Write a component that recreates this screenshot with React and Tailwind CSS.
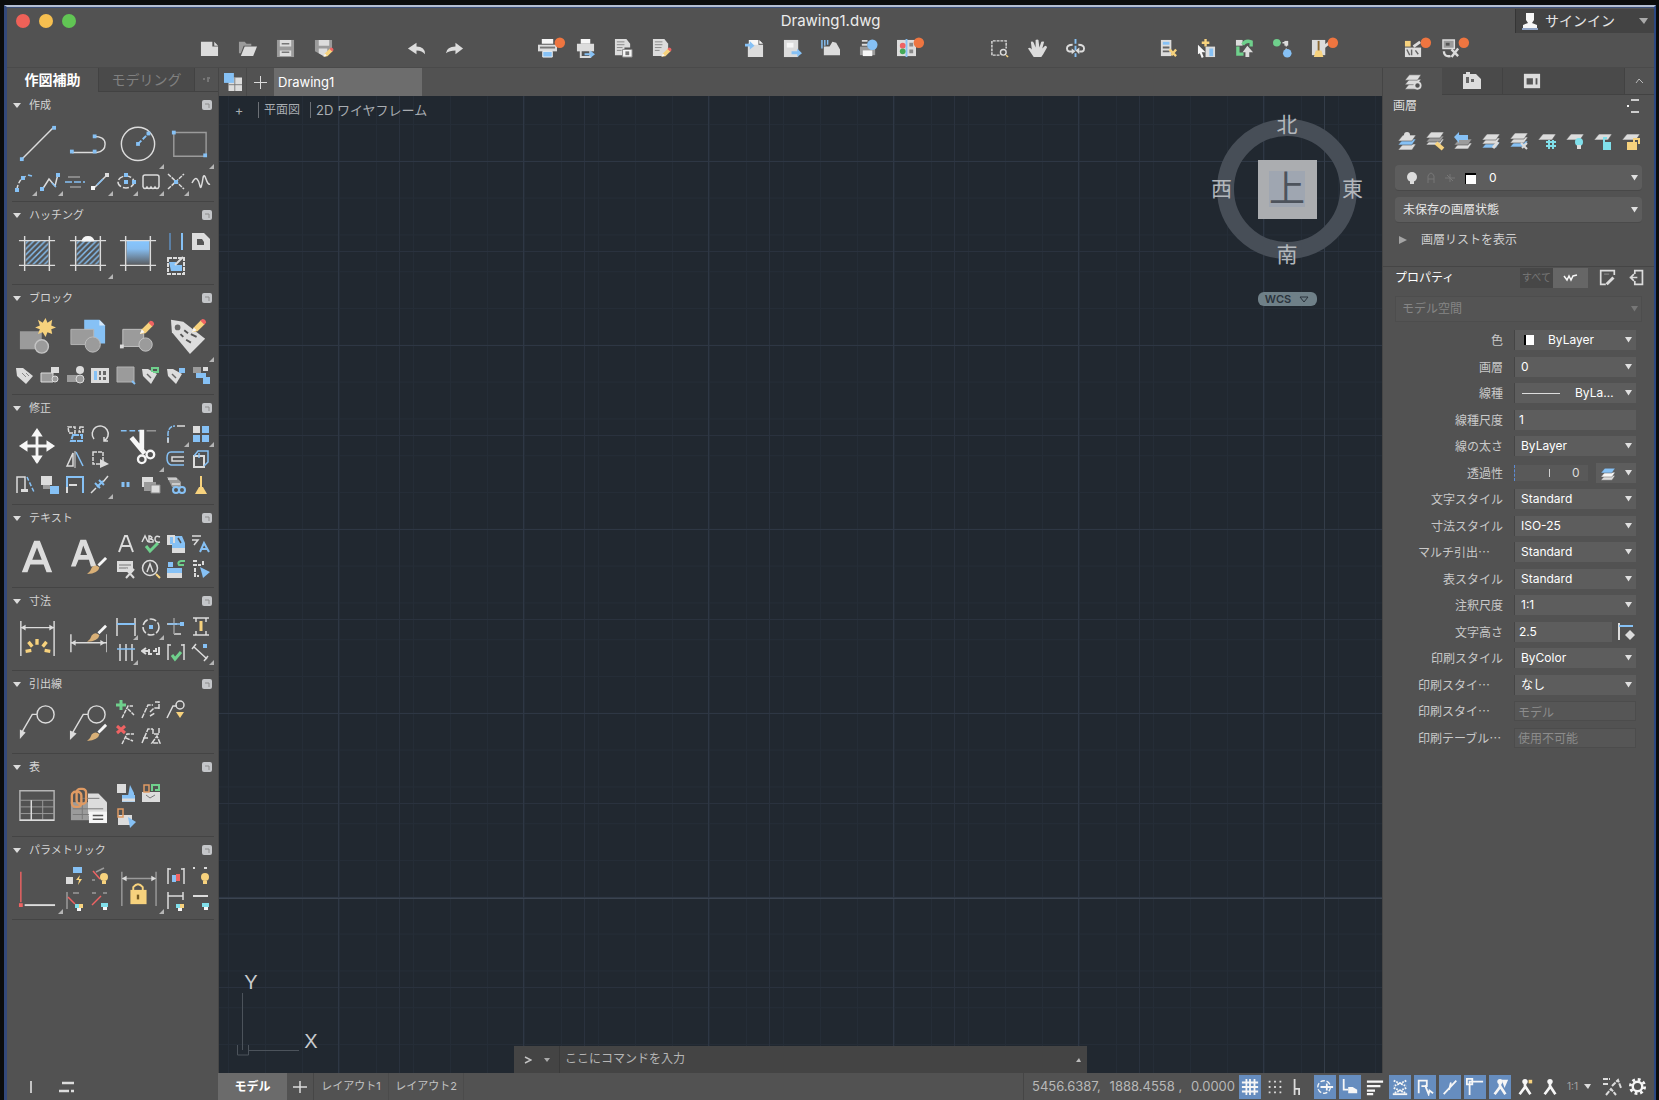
import React, { useState } from 'react';
import clsx from 'clsx';

const L = '#dcdcdc';
const G = '#9b9b9b';
const B = '#86c1f5';
const Y = '#f7d27d';
const R = '#ee6363';
const E = '#6fd08c';
const W = '#f6f6f6';
const C = '#80dfea';

const Svg = ({ size = 20, box = size, children }) => (
  <svg width={size} height={size} viewBox={`0 0 ${box} ${box}`} fill="none" aria-hidden="true">{children}</svg>
);

const Badge = () => <circle cx="23" cy="4" r="5.5" fill="#ee7540" />;

const Pencil = ({ x = 0, y = 0, s = 1 }) => (
  <g transform={`translate(${x} ${y}) scale(${s})`}>
    <path d="M0 14l2-5 8-8 4 4-8 8z" fill={Y} />
    <path d="M9 2l2-2q4 0 4 4l-2 2z" fill={R} />
    <path d="M0 14l2-5 3 3z" fill={W} />
  </g>
);

const Brush = ({ x = 0, y = 0 }) => (
  <g transform={`translate(${x} ${y})`}>
    <path d="M20 1L12 9" stroke={W} strokeWidth="3" />
    <path d="M0 18q4-3 5-7 4-4 8 0-1 6-13 7z" fill="#d9b077" />
  </g>
);

/* ---------- top toolbar ---------- */
const bar = {
  new: <path d="M1 3h12v5h6v10H1zM15 3l4 4h-4z" fill={L} />,
  open: <><path d="M1 3h6l2 2h5v2H6L3 15H1z" fill={G} /><path d="M7 8h13l-4 10H3z" fill={L} /></>,
  save: <><path d="M1 1h18v18H1z" fill={G} /><path d="M4 1h12v7H4zM4 12h12v6H4z" fill={L} /><path d="M6 5h8M6 14h8" stroke="#777" strokeWidth="1.5" /></>,
  saveAs: <><path d="M1 1h18v12l-7 6-11-6z" fill={G} /><path d="M5 1h11v6H5zM5 10h9v5l-4 3-5-3z" fill={L} /><Pencil x={10} y={9} s={0.7} /></>,
  undo: <path d="M1 10l9-6v4q9 0 9 8-3-4-9-4v4z" fill={L} />,
  redo: <path d="M19 10l-8-6v4q-9 0-10 7 4-3 10-3v4z" fill={L} />,
  plot: <><path d="M4 0h12v5H4z" fill={W} /><path d="M0 6h20v7H0z" fill={L} /><path d="M2 8h16v2H2z" fill="#777" /><path d="M5 13h10v6H5z" fill={B} stroke={W} /><Badge /></>,
  plot2: <><path d="M5 0h10v5H5z" fill={W} /><path d="M1 5h18v8H1z" fill={L} /><path d="M5 12h10v7H5z" fill="#555" stroke={L} strokeWidth="2" /><path d="M9 15h6v-3l5 4-5 4v-3H9z" fill={B} /></>,
  page: <><path d="M1 0h12l4 5v4h-6v8H1z" fill={L} /><path d="M3 3h8M3 6h8M3 9h6M3 12h5" stroke="#888" /><path d="M9 11h10v8H9z" fill={W} stroke="#888" /><path d="M12 13h4v4h-4z" fill="#777" /></>,
  batch: <><path d="M1 0h12l4 5v7l-5 6H1z" fill={L} /><path d="M3 3h8M3 6h8M3 9h7M3 12h5" stroke="#888" /><Pencil x={10} y={9} s={0.7} /></>,
  import: <><path d="M3 5h9V1h2v5h5v13H3z" fill={L} /><path d="M4 1h10v5H4zM15 1l4 4h-4z" fill={W} /><path d="M0 5h5V2l5 5-5 4V8H0z" fill={B} /></>,
  export: <><path d="M1 1h15v18H1z" fill={L} /><path d="M4 4h7v5H4z" fill={W} /><path d="M9 13h6v-3l5 5-5 4v-3H9z" fill={B} /></>,
  attach: <><path d="M3 17V8h6l3-5 4 1 4 7v6z" fill={L} /><path d="M1 1v9M4 1v6M7 1v5" stroke={B} strokeWidth="1.5" /></>,
  web: <><path d="M1 8h16v9H1z" fill={G} /><path d="M4 12h10v6H4z" fill={W} /><path d="M3 2h6M3 6h6" stroke={L} strokeWidth="2" /><circle cx="14" cy="6" r="5.5" fill={B} /></>,
  compare: <><path d="M0 1h20v17H0z" fill={L} /><path d="M10 0v19" stroke={B} strokeWidth="2" /><circle cx="6" cy="7" r="3" fill={R} /><circle cx="6" cy="13" r="3" fill="#45a857" /><path d="M13 4h4v4h-4zM13 11h4v4h-4z" fill="#888" /><Badge /></>,
  window: <><path d="M10 17H2V2h15v8" stroke={L} strokeWidth="1.5" strokeDasharray="3 1" /><circle cx="14" cy="14" r="3" fill="#525252" stroke={L} strokeWidth="1.5" /><path d="M17 17l2 2" stroke={Y} strokeWidth="1.5" /></>,
  pan: <path d="M6 19q-4-6-6-9 2-2 4 1L3 3q2-1 3 1l2 5V1q2-1 3 0l1 8 2-6q2-1 3 0l-2 7 3-3q2 0 2 2l-4 7-2 3z" fill={L} />,
  orbit: <><path d="M10 0v5M10 7v5M10 15v4" stroke={B} strokeWidth="2" /><path d="M7 6q-6 0-6 4t6 3M13 6q6 0 6 4t-5 3" stroke={L} strokeWidth="2" /><path d="M6 10l4 3-4 3zM14 9v7l-4-4z" fill={L} /></>,
  props: <><path d="M2 1h11v17H2z" fill={L} /><path d="M4 3h7v3H4z" fill={B} /><path d="M4 9h7M4 13h7" stroke="#666" strokeWidth="2" /><path d="M11 11l7 7M18 11l-5 6" stroke={Y} strokeWidth="2.5" /></>,
  select: <><path d="M1 6l8 8H5l2 5-2 1-2-5-2 1z" fill={W} /><path d="M9 8h10v11H9z" fill={L} /><path d="M13 10h4v8h-4z" fill={B} /><path d="M9 0v8M5 4h8" stroke={Y} strokeWidth="2.5" /></>,
  sync: <><path d="M1 1h7v6H1z" fill={L} /><path d="M8 6q3-5 9-3v5M3 8v8h6" stroke={E} strokeWidth="3.5" /><path d="M13 7l6 7h-4v5h-4v-5H8z" fill={L} /></>,
  nodes: <><path d="M5 4h9v10" stroke={L} strokeWidth="1.5" strokeDasharray="3 2" /><circle cx="4" cy="4" r="4" fill={E} /><path d="M12 2h4v5h-4z" fill={L} /><circle cx="15" cy="15" r="4.500" fill={B} /></>,
  clean: <><path d="M1 1h14v16H1z" fill={L} /><path d="M8 2v11" stroke="#8c6a34" strokeWidth="2" /><path d="M5 12h6l2 7H3z" fill={Y} /><path d="M14 8l5-4" stroke={L} strokeWidth="3" /><Badge /></>,
  count: <><path d="M1 2h6v6H1z" fill={Y} /><path d="M1 9h17v10H1z" fill={L} /><path d="M3 11l3 6M8 11v6M12 12l3 4" stroke="#666" strokeWidth="1.5" /><path d="M10 8l7-5" stroke={L} strokeWidth="3" /><Badge /></>,
  find: <><path d="M1 1h12v9H1z" fill={G} stroke={L} strokeWidth="1.500" /><path d="M4 4h4v3H4z" fill="#555" /><path d="M2 13q0 6 7 5M17 10l-7 9M10 11l7 7" stroke={L} strokeWidth="2.500" /><Badge /></>,
};

const barGroups = [
  ['new', 'open', 'save', 'saveAs'],
  ['undo', 'redo'],
  ['plot', 'plot2', 'page', 'batch'],
  ['import', 'export', 'attach', 'web', 'compare'],
  ['window', 'pan', 'orbit'],
  ['props', 'select', 'sync', 'nodes', 'clean'],
  ['count', 'find'],
];

/* ---------- tool palette, large icons on a 40 grid ---------- */
const sq = (x, y, c = B) => <rect x={x - 2} y={y - 2} width="4" height="4" fill={c} />;

const Frame = ({ fill, top }) => (
  <>
    <rect x="8" y="7" width="24" height="25" fill={fill} />
    <path d="M1 7h38M1 33h38" stroke={L} strokeWidth="1.5" />
    <path d="M7 2v37M33 2v37" stroke={L} strokeWidth="1.5" />
    {top}
  </>
);

const big = {
  line: <><path d="M4 37L37 4" stroke={L} strokeWidth="1.500" />{sq(4, 37)}{sq(38, 4)}</>,
  pline: <><path d="M3 30h26q9-1 9-9t-12-8" stroke={L} strokeWidth="1.500" />{sq(3, 29)}{sq(27, 29)}{sq(27, 13)}</>,
  circle: <><circle cx="20" cy="21" r="17.500" stroke={L} strokeWidth="1.500" /><path d="M20 21l11-11" stroke={B} strokeWidth="2" strokeDasharray="5 2" />{sq(20, 21)}{sq(31, 10)}</>,
  rect: <><path d="M4 9h34v25H4z" stroke={G} strokeWidth="1.500" />{sq(4, 9)}{sq(37, 33)}</>,
  hatch: <Frame fill="url(#hatch)" />,
  boundary: <Frame fill="url(#hatch)" top={<path d="M13 8q1-6 7-6t7 6z" fill={W} />} />,
  gradient: <Frame fill="url(#grad)" />,
  insert: <><path d="M2 15h23v19H2z" fill={G} /><circle cx="25" cy="31" r="7" fill={G} stroke="#c4c4c4" strokeWidth="1.500" /><path d="M29 1l2 5 5-3-1 6 5 2-5 2 1 5-5-2-2 5-3-5-5 2 2-5-5-2 5-2-2-6 5 3z" fill={Y} /></>,
  makeBlock: <><path d="M16 3h16l6 6v19H16z" fill={B} /><path d="M32 3l6 6h-6z" fill="#d5e9fb" /><path d="M2 13h24v16H2z" fill={G} stroke="#b5b5b5" /><circle cx="25" cy="29" r="8" fill={G} stroke="#bdbdbd" /></>,
  editBlock: <><path d="M4 13h22v18H4z" fill={G} stroke="#c4c4c4" /><circle cx="28" cy="29" r="7" fill={G} stroke="#c4c4c4" />{sq(3, 31, L)}<Pencil x={22} y={4} /></>,
  attr: <><path d="M1 3l13 2 23 18-16 16L2 16z" fill={L} /><circle cx="8" cy="11" r="3" fill="#666" /><path d="M11 18l3 3M15 14l4 3M17 24l5 3M22 18l6 3" stroke="#555" strokeWidth="2" /><Pencil x={23} y={2} /></>,
  move: <><path d="M20 5v32M4 20h32" stroke={W} strokeWidth="3" /><path d="M20 1l6 9H14zM20 39l-6-9h12zM1 20l9-6v12zM39 20l-9-6v12z" fill={W} /></>,
  trim: <><path d="M2 4h20" stroke={B} strokeWidth="1.500" strokeDasharray="6 3" /><path d="M29 4h10" stroke={G} strokeWidth="1.500" /><path d="M24 3v20M13 11l14 17" stroke={W} strokeWidth="5" /><circle cx="24" cy="34" r="4" stroke={W} strokeWidth="2.500" /><circle cx="33" cy="29" r="4" stroke={W} strokeWidth="2.500" /></>,
  mtext: <path d="M4 37L17 4h6l13 33h-6l-3-8H13l-3 8zM15 24h10l-5-13z" fill={L} fillRule="evenodd" />,
  textStyle: <><path d="M2 31L12 3h6l11 28h-6l-2-7H10l-3 7zM12 19h7l-4-10z" fill={L} fillRule="evenodd" /><Brush x={19} y={21} /></>,
  dim: <><path d="M3 1v37M38 1v37M3 8h35" stroke={L} strokeWidth="1.500" /><path d="M3 8l5-3v6zM38 8l-5-3v6z" fill={L} /><path d="M20 20v6M11 23l4 5M30 23l-4 5M8 33l6-1M34 33l-6-1" stroke={Y} strokeWidth="3.500" /></>,
  dimStyle: <><path d="M2 15v19M40 15v19M2 24h38" stroke={L} strokeWidth="1.500" /><path d="M2 24l5-3v6zM38 24l-5-3v6z" fill={L} /><Brush x={19} y={5} /></>,
  mleader: <><circle cx="29" cy="12" r="9" stroke={L} strokeWidth="1.500" /><path d="M20 12h-5L4 31" stroke={L} strokeWidth="1.500" /><path d="M2 28l6 3-6 7z" fill={L} /></>,
  leaderStyle: <><circle cx="29" cy="12" r="9" stroke={L} strokeWidth="1.500" /><path d="M20 12h-5L4 31" stroke={L} strokeWidth="1.500" /><path d="M1 29l7 3-7 7z" fill={L} /><Brush x={19} y={22} /></>,
  table: <><path d="M2 5h36v31H2z" stroke="#b5b5b5" strokeWidth="1.500" /><path d="M2 15h36M2 22h36M2 29h36M14 15v21M26 15v21" stroke={G} /><path d="M2 36h36M14 15v21" stroke={L} strokeWidth="1.500" /></>,
  dataLink: <><path d="M2 17h26v19H2z" fill={G} /><path d="M20 8h11l9 9v14H20z" fill={L} /><path d="M12 13h20M4 24h32M4 30h32M14 17v18" stroke="#777" /><path d="M21 27h20v12H21z" fill={W} /><path d="M25 31h11M25 35h11" stroke="#555" strokeWidth="1.500" /><rect x="3" y="6" width="10" height="16" rx="4" stroke="#df9a63" strokeWidth="2.500" /><rect x="8" y="3" width="10" height="16" rx="4" stroke="#df9a63" strokeWidth="2.500" /></>,
  geoAuto: <><path d="M3 3v32" stroke={R} strokeWidth="1.500" />{sq(3, 38, R)}<path d="M7 38h32" stroke={L} strokeWidth="2" /></>,
  dimLock: <><path d="M3 3v36M39 3v36M3 10h36" stroke={G} strokeWidth="1.500" /><path d="M3 10l5-3v6zM39 10l-5-3v6z" fill={L} /><path d="M12 22h17v15H12z" fill={Y} /><path d="M15 22v-3q5-6 10 0v3" stroke={Y} strokeWidth="2" /><path d="M20 27v5" stroke="#775c22" strokeWidth="2.500" /></>,
};

/* ---------- tool palette, small icons on a 20 grid ---------- */
const s = '1.500';
const tag = 'M1 3h7l10 8-7 8L2 11z';
const lightbulb = <><circle cx="14" cy="11" r="4" fill={Y} /><path d="M12 15h4v3h-4z" fill={Y} /></>;
const swatch = <><path d="M10 13h4v4h-4z" fill={C} /><path d="M14 13h4v4h-4z" fill={Y} /><path d="M12 17h4v3h-4z" fill={W} /></>;

const small = {
  arc: <><path d="M2 17Q4 6 12 4" stroke={L} strokeWidth={s} strokeDasharray="4 2" />{sq(2, 18)}{sq(8, 6)}<path d="M13 3l4 1" stroke={B} strokeWidth={s} /></>,
  spline: <><path d="M2 18L9 7l6 7 3-12" stroke={L} strokeWidth={s} />{sq(2, 17)}{sq(18, 3)}<path d="M12 11l4 4" stroke={B} strokeWidth={s} /></>,
  mline: <><path d="M3 5h12M5 15h11" stroke={G} strokeWidth={s} /><path d="M0 10h20" stroke={B} strokeWidth={s} strokeDasharray="7 2" /></>,
  ray: <><path d="M3 17L18 2" stroke={L} strokeWidth={s} /><path d="M7 13l6-6" stroke={B} strokeWidth={s} />{sq(3, 16, W)}{sq(17, 3, L)}</>,
  ellipse: <><ellipse cx="10" cy="10" rx="8" ry="6" stroke={L} strokeWidth={s} strokeDasharray="6 2" />{sq(10, 10)}{sq(18, 10)}{sq(10, 3)}</>,
  revcloud: <><path d="M2 15V5q0-2 2-2h12q2 0 2 2v10" stroke={L} strokeWidth={s} /><path d="M2 15q2 3 4 0 2 3 4 0 2 3 4 0 2 3 4 0" stroke={L} strokeWidth={s} /></>,
  xline: <><path d="M2 2l16 15M2 17L18 2" stroke={L} strokeWidth={s} strokeDasharray="4 1" />{sq(10, 10)}</>,
  sketch: <path d="M1 11q3-6 5-4t3 7 3-8q1-5 3 1t4 5" stroke={L} strokeWidth={s} />,
  colHatch: <><path d="M4 2v17" stroke="#5f8fc0" strokeWidth={s} /><path d="M16 2v17" stroke={B} strokeWidth="2" /></>,
  wipe: <><path d="M1 2h12l6 6v11H1z" fill={L} /><path d="M6 8h5l2 3v3H6z" fill="#555" /></>,
  region: <><path d="M2 2h16v16H2z" stroke={L} strokeWidth="2" strokeDasharray="4 1" /><path d="M3 6h7v3h6v6H5z" fill={B} /><path d="M9 9l8-8" stroke={L} strokeWidth="2" /></>,
  tag: <><path d={tag} fill={L} /><path d="M7 8l4 4M11 8l3 3" stroke="#888" /></>,
  blk1: <><path d="M1 8h12v9H1z" fill={G} stroke={L} /><path d="M11 2h8v6h-8z" fill={L} /><circle cx="15" cy="14" r="3" fill={G} stroke={L} /></>,
  blk2: <><path d="M2 10h11v7H2z" fill={G} /><circle cx="15" cy="5" r="4" fill={L} /><circle cx="15" cy="14" r="4" fill={G} stroke={L} /></>,
  blkTable: <><path d="M1 3h18v15H1z" fill={L} /><path d="M4 6h3v9H4z" fill={B} /><path d="M9 6h2v4H9zM13 6h3v4h-3zM9 12h2v3H9zM13 12h3v3h-3z" fill="#666" /></>,
  base: <><path d="M1 2h17v15H1z" fill={G} stroke="#b3b3b3" /><path d="M16 16l3 3" stroke={B} strokeWidth="2" /></>,
  tagSync: <><path d="M1 4h6l9 5-6 10L2 11z" fill={L} /><path d="M6 9l4 4" stroke="#666" strokeWidth={s} /><path d="M11 7V3h6v4h-5" stroke={E} strokeWidth="2" /></>,
  tagOut: <><path d="M1 4h6l9 5-6 10L2 11z" fill={L} /><path d="M6 9l4 4" stroke="#666" strokeWidth={s} /><path d="M13 3h6v5h-6z" fill={B} /></>,
  swap: <><path d="M2 2h8v6H2z" fill={G} /><path d="M12 2h5v4h-5z" fill={L} /><path d="M5 8h10v4h4v7h-7v-6H5z" fill={B} /></>,
  copy: <><path d="M3 3h7v6H4zM15 3h3v5h-4z" stroke={L} strokeWidth={s} strokeDasharray="4 1" /><path d="M8 11h9v6H6z" stroke={B} strokeWidth="2" strokeDasharray="6 1" /></>,
  rotate: <path d="M4 15A8 8 0 1 1 14 17M14 13v4h4" stroke={L} strokeWidth={s} />,
  mirror: <><path d="M2 17L8 4v13z" stroke={L} strokeWidth={s} /><path d="M11 3l7 14" stroke={B} strokeWidth={s} /><path d="M10 2v17" stroke={L} /></>,
  stretch: <><path d="M3 3h10v12H3z" stroke={L} strokeWidth={s} strokeDasharray="4 1" /><path d="M10 10l9 5-9 4z" fill={L} /></>,
  fillet: <><path d="M2 18V9q1-7 7-7" stroke={B} strokeWidth={s} strokeDasharray="5 1" /><path d="M11 2h8M2 14v5" stroke={L} strokeWidth={s} /></>,
  array: <><path d="M2 2h7v7H2z" fill={L} /><path d="M11 2h7v7h-7zM2 11h7v7H2zM11 11h7v7h-7z" fill={B} /></>,
  offset: <><path d="M18 3H5Q1 3 1 9t4 7h13" stroke={B} strokeWidth={s} /><path d="M18 8H6v4h12" stroke={L} strokeWidth={s} /></>,
  box: <><path d="M3 7h10v11H3z" stroke={L} strokeWidth="2" /><path d="M3 7l4-5h10v11l-4 4M8 9V4" stroke={B} strokeWidth={s} /></>,
  align: <><path d="M2 18V2h8v12" stroke={L} strokeWidth={s} /><path d="M12 2l7 15" stroke={B} strokeWidth={s} strokeDasharray="4 2" /><path d="M6 14h7v3H6z" fill={L} /></>,
  scale: <><path d="M1 1h11v9H1z" fill={L} /><path d="M3 10h7v4H3z" fill={G} /><path d="M10 11h9v8h-9z" fill={B} /></>,
  extend: <><path d="M2 18V2h16v16" stroke={B} strokeWidth="2" /><path d="M4 10h8M2 12v6" stroke={L} strokeWidth="2" /></>,
  break: <><path d="M1 18l5-5M13 7l5-6" stroke={L} strokeWidth={s} /><path d="M5 8l5 5M9 5l5 5M7 12l6-6" stroke={B} strokeWidth="2" /></>,
  join: <path d="M7 7v5M12 7v5" stroke={B} strokeWidth="3" />,
  order: <><path d="M1 2h11v10H1z" fill={L} /><path d="M3 7h12v9H3z" fill={G} /><path d="M10 10h9v8h-9z" fill={L} stroke="#888" /></>,
  chain: <><path d="M1 2h9l5 5v5H6z" fill={G} /><path d="M2 4h9M6 9h8" stroke={L} strokeWidth={s} /><circle cx="10" cy="15" r="3" stroke={B} strokeWidth="2" /><circle cx="16" cy="15" r="3" stroke={B} strokeWidth="2" /></>,
  purge: <><path d="M10 1v12" stroke={Y} strokeWidth="2" /><path d="M8 12h4l4 7H4z" fill={Y} /></>,
  text: <path d="M3 18L9 2h2l6 16M6 12h8" stroke={L} strokeWidth="2" />,
  spell: <><path d="M1 8l3-6 3 6M8 2v6h4q1-3-3-3 4-1 0-3zM19 3q-5-2-5 2t5 3" stroke={L} strokeWidth={s} /><path d="M5 12l4 5 8-8" stroke={E} strokeWidth="3" /></>,
  field: <><path d="M1 1h8v10H1z" fill={L} /><path d="M4 3h3v7H4z" fill={B} /><path d="M9 2h7l3 7v5H6V9h3z" fill={B} /><path d="M12 4l3 5" stroke="#525252" strokeWidth={s} /><path d="M6 14h13v5H6z" fill={L} /></>,
  fitText: <><path d="M1 2h9M1 6h6l-4 5" stroke={L} strokeWidth={s} /><path d="M9 18l4-9 5 9M11 15h6" stroke={B} strokeWidth="2" /></>,
  note: <><path d="M1 2h16v11H1z" fill={L} /><path d="M3 6h12M3 9h9" stroke="#777" /><path d="M10 10l8 9M18 10l-8 9" stroke={L} strokeWidth="2" /></>,
  search: <><circle cx="9" cy="9" r="7.500" stroke={L} strokeWidth={s} /><path d="M6 13l3-8 3 8" stroke={L} strokeWidth={s} /><path d="M15 15l4 4" stroke={Y} strokeWidth="2" /></>,
  update: <><path d="M2 3h5v5H2z" fill={B} /><path d="M1 9h15v5H1z" fill={B} /><path d="M1 14h15v5H1z" fill={L} /><path d="M18 6h-5q-2-3 2-4h4" stroke={E} strokeWidth="2" /></>,
  convert: <><path d="M2 2h5M2 6h8M4 9v8h4M12 2v4" stroke={L} strokeWidth="2" strokeDasharray="4 1" /><path d="M9 8l10 5-7 6-1-4z" fill={B} /></>,
  dLin: <><path d="M1 1v18M19 1v18" stroke={L} strokeWidth={s} /><path d="M1 7h18" stroke={B} strokeWidth="2" /></>,
  dRad: <><circle cx="10" cy="10" r="8" stroke={L} strokeWidth={s} strokeDasharray="7 2" />{sq(10, 10)}</>,
  dOrd: <><path d="M1 7h10M8 17h7" stroke={L} strokeWidth={s} /><path d="M8 1v16" stroke={G} strokeWidth={s} /><path d="M2 7h13" stroke={B} strokeWidth={s} />{sq(16, 7)}</>,
  dInsp: <><path d="M2 1h16M2 18h16M5 1v4M15 1v4M5 14v4M15 14v4" stroke={L} strokeWidth={s} /><path d="M10 4v10" stroke={Y} strokeWidth="3" /></>,
  dCont: <><path d="M4 2v17M10 2v17M16 2v17" stroke={L} strokeWidth={s} /><path d="M1 7h18" stroke={B} strokeWidth={s} /></>,
  dJog: <path d="M1 9h7M5 6l-4 3 4 3M8 7v5h3M12 9h3V6M15 12h3V5" stroke={L} strokeWidth="2" />,
  dCheck: <><path d="M2 2v16M18 2v16M2 3h3M15 3h3" stroke={L} strokeWidth={s} /><path d="M6 13l3 4 6-7" stroke={E} strokeWidth="3" /></>,
  dObl: <><path d="M3 5l13 12M1 7l4-5M13 19l4-5" stroke={L} strokeWidth={s} />{sq(14, 4)}</>,
  lAdd: <><path d="M5 0v10M0 5h10" stroke={E} strokeWidth="3" /><path d="M6 18l6-12h5M12 9l6 6" stroke={L} strokeWidth={s} strokeDasharray="4 1" /></>,
  lAlign: <path d="M1 18L7 5h5M9 12l4-4h5M9 16l5-3M14 2h4v8" stroke={L} strokeWidth={s} strokeDasharray="5 1" />,
  lCollect: <><path d="M1 18L7 6h4" stroke={L} strokeWidth={s} /><circle cx="14" cy="5" r="4" stroke={L} strokeWidth={s} /><path d="M10 12h8l-4 6z" fill={Y} /></>,
  lDel: <><path d="M1 1l8 7M9 1L1 8" stroke={R} strokeWidth="3" /><path d="M6 19l5-10h7M10 13l7 3" stroke={L} strokeWidth={s} strokeDasharray="4 1" /></>,
  lMerge: <path d="M1 18L7 4h5M12 4v5h6V3M11 18l5-7 3 7zM2 13h5" stroke={L} strokeWidth={s} strokeDasharray="5 1" />,
  tLink: <><path d="M1 1h9v9H1z" fill={L} /><path d="M14 2l4 8v3h-6z" fill={B} /><path d="M6 12h13v7H6z" fill={B} /><path d="M6 17h13" stroke={L} strokeWidth="3" /></>,
  tSync: <><path d="M1 9h18v10H1z" fill={L} /><path d="M3 2h5v7H3z" stroke="#df9a63" strokeWidth={s} /><path d="M11 8V2h7v5h-4" stroke={E} strokeWidth="2" /><path d="M5 12l4 3 5-3" stroke="#777" /></>,
  tExp: <><path d="M2 7h14v10H2z" fill={L} /><path d="M2 1h5v8H2z" stroke="#df9a63" strokeWidth={s} /><path d="M12 9l8 5-6 6z" fill={B} /></>,
  pShow: <><path d="M8 1h9v6H8z" fill={B} /><path d="M1 11h7v7H1z" fill={L} /><path d="M15 9l-4 5h3l-1 5 4-6h-3z" fill={Y} /></>,
  pHide: <><path d="M10 13L3 5" stroke={R} strokeWidth={s} /><path d="M6 6l8-4M2 14h3" stroke={G} strokeWidth={s} />{lightbulb}</>,
  pCoin: <><path d="M2 1v17M8 2h6" stroke={G} strokeWidth={s} /><path d="M10 13L3 6" stroke={R} strokeWidth={s} />{swatch}</>,
  pDel: <><path d="M2 2h4M13 2h4" stroke={G} strokeWidth={s} /><path d="M11 5l-9 9" stroke={R} strokeWidth={s} /><path d="M11 12h7v4h-7z" fill={C} /><path d="M13 16h4v3h-4z" fill={W} /></>,
  pDim: <><path d="M2 2v16M18 2v16M2 3h3M15 3h3" stroke={L} strokeWidth={s} /><path d="M6 9h4v7H6z" fill={B} /><path d="M10 8h4v7h-4z" fill={R} /></>,
  pDots: <><path d="M2 2h2M13 2h3" stroke={L} strokeWidth="2" />{lightbulb}</>,
  pConv: <><path d="M2 1v17M2 5h15M17 1v8" stroke={L} strokeWidth={s} />{swatch}</>,
  pLine: <><path d="M2 5h15" stroke={L} strokeWidth="2" /><path d="M11 12h7v4h-7z" fill={C} /><path d="M13 16h4v3h-4z" fill={W} /></>,
};

// a trailing "+" marks a tool with a fly-out, a leading "*" a large one
const sections = [
  { name: '作成', tools: ['*line', '*pline', '*circle+', '*rect+', 'arc+', 'spline+', 'mline', 'ray+', 'ellipse+', 'revcloud+', 'xline+', 'sketch'] },
  { name: 'ハッチング', tools: ['*hatch', '*boundary+', '*gradient', 'colHatch', 'wipe', 'region'] },
  { name: 'ブロック', tools: ['*insert', '*makeBlock', '*editBlock', '*attr+', 'tag', 'blk1', 'blk2', 'blkTable', 'base', 'tagSync', 'tagOut', 'swap'] },
  { name: '修正', tools: ['*move', 'copy', 'rotate', '*trim+', 'fillet+', 'array+', 'mirror', 'stretch', 'offset', 'box', 'align', 'scale', 'extend', 'break+', 'join', 'order', 'chain', 'purge'] },
  { name: 'テキスト', tools: ['*mtext', '*textStyle', 'text', 'spell', 'field', 'fitText', 'note', 'search', 'update', 'convert'] },
  { name: '寸法', tools: ['*dim', '*dimStyle', 'dLin+', 'dRad+', 'dOrd', 'dInsp', 'dCont+', 'dJog', 'dCheck', 'dObl+'] },
  { name: '引出線', tools: ['*mleader', '*leaderStyle', 'lAdd', 'lAlign', 'lCollect', '', 'lDel', 'lMerge'] },
  { name: '表', tools: ['*table', '*dataLink', 'tLink', 'tSync', '', '', 'tExp'] },
  { name: 'パラメトリック', tools: ['*geoAuto+', 'pShow', 'pHide', '*dimLock+', 'pDim', 'pDots', 'pCoin', 'pDel', 'pConv', 'pLine'] },
];

const Tool = ({ id }) => {
  if (!id) return <span />;
  const large = id.startsWith('*');
  const key = id.replace(/[*+]/g, '');
  return (
    <button aria-label={key} className={clsx('relative flex items-center justify-center', large && 'col-span-2 row-span-2')}>
      {large ? <Svg size={38} box={40}>{big[key]}</Svg> : <Svg size={20}>{small[key]}</Svg>}
      {id.endsWith('+') && (
        <svg className="absolute right-0 -bottom-px" width="5" height="5" aria-hidden="true"><path d="M5 0v5H0z" fill="#b5b5b5" /></svg>
      )}
    </button>
  );
};

const Section = ({ name, tools }) => {
  const [open, setOpen] = useState(true);
  return (
    <section className="mr-1 ml-[5px] border-b border-[#444] pb-[6px]">
      <div className="flex h-[26px] items-center pl-px">
        <button aria-expanded={open} onClick={() => setOpen(!open)} className="flex flex-1 items-center gap-2 text-[11px] leading-4 text-[#d4d4d4]">
          <svg width="8" height="5" aria-hidden="true"><path d="M0 0h8L4 5z" fill={L} /></svg>
          {name}
        </button>
        <button aria-label={`${name} 設定`} className="mr-[2px]">
          <svg width="10" height="10" aria-hidden="true"><rect width="10" height="10" rx="2" fill="#c4c6c9" /><path d="M3 4h4v4" stroke="#8c8c8c" fill="none" /></svg>
        </button>
      </div>
      {open && (
        <div className="grid auto-rows-[27px] grid-cols-8 grid-rows-[25px_25px]">
          {tools.map((t, i) => <Tool key={i} id={t} />)}
        </div>
      )}
    </section>
  );
};

/* ---------- layers + properties ---------- */
const sheet = (y, c = L) => <path d={`M6 ${y}h13l-4 6H1z`} fill={c} stroke="#525252" strokeWidth=".600" />;
const layerIcons = [
  ['画層プロパティ', <>{sheet(13)}{sheet(8, B)}{sheet(4)}<circle cx="10" cy="4" r="3" fill={L} /></>],
  ['画層を一致', <>{sheet(8)}{sheet(5, G)}{sheet(1)}<path d="M11 12l7 6" stroke={Y} strokeWidth="4" /></>],
  ['前の画層', <>{sheet(12)}{sheet(8, G)}<path d="M1 6l5-5v3h9v5H6v3z" fill={B} /></>],
  ['選択表示', <>{sheet(11, B)}{sheet(7)}{sheet(3, L)}<path d="M12 17l5-6" stroke={L} strokeWidth="3" /></>],
  ['選択表示解除', <>{sheet(10, B)}{sheet(6)}{sheet(2, L)}<path d="M12 12l6 6M18 12l-5 5" stroke={L} strokeWidth="2" /></>],
  ['フリーズ', <>{sheet(3)}<path d="M9 11h10M9 15h10M12 9v9M16 9v9" stroke={C} strokeWidth="2" /></>],
  ['非表示', <>{sheet(3)}<circle cx="14" cy="11" r="4" fill={C} /><path d="M12 14h4v4h-4z" fill={L} /></>],
  ['ロック', <>{sheet(3)}<path d="M10 11h8v8h-8z" fill={C} /><path d="M11 11V7h3" stroke={C} strokeWidth="2" /></>],
  ['ロック解除', <>{sheet(3)}<path d="M6 11h10v8H6z" fill={Y} /><path d="M13 11V8h5v5" stroke={Y} strokeWidth="2" /></>],
];

const Caret = ({ dim }) => (
  <svg className="pointer-events-none absolute top-1/2 right-1 -mt-[3px]" width="7" height="6" aria-hidden="true">
    <path d="M0 0h7L3.500 5.500z" fill={dim ? '#777' : '#e0e0e0'} />
  </svg>
);

const propRows = [
  { label: '色', value: 'ByLayer', lead: 'color' },
  { label: '画層', value: '0' },
  { label: '線種', value: 'ByLa…', lead: 'line' },
  { label: '線種尺度', value: '1', kind: 'text' },
  { label: '線の太さ', value: 'ByLayer' },
  { label: '透過性', value: '0', kind: 'slider' },
  { label: '文字スタイル', value: 'Standard' },
  { label: '寸法スタイル', value: 'ISO-25' },
  { label: 'マルチ引出…', value: 'Standard' },
  { label: '表スタイル', value: 'Standard' },
  { label: '注釈尺度', value: '1:1' },
  { label: '文字高さ', value: '2.5', kind: 'height' },
  { label: '印刷スタイル', value: 'ByColor' },
  { label: '印刷スタイ…', value: 'なし' },
  { label: '印刷スタイ…', value: 'モデル', kind: 'off' },
  { label: '印刷テーブル…', value: '使用不可能', kind: 'off' },
];

const field = 'h-5 w-full border-l border-[#454545] bg-[#5d5d5d] text-[12px] text-white outline-none';

const PropField = ({ row, id }) => {
  const { kind, lead, value } = row;
  if (kind === 'text') return <input id={id} defaultValue={value} className={clsx(field, 'pl-1')} />;
  if (kind === 'off') return <input id={id} disabled defaultValue={value} className="h-5 w-full border border-[#4c4c4c] bg-[#565656] pl-[3px] text-[12px] text-[#8c8c8c]" />;
  if (kind === 'height') {
    return (
      <div className="flex items-center gap-1">
        <input id={id} defaultValue={value} className={clsx(field, 'min-w-0 flex-1 pl-1')} />
        <button aria-label="高さを指定"><Svg>
          <path d="M3 1v17" stroke={L} strokeWidth="2" /><path d="M3 4h14" stroke={B} strokeWidth="2" /><path d="M14 8l5 5-5 5-5-5z" fill={L} />
        </Svg></button>
      </div>
    );
  }
  if (kind === 'slider') {
    return (
      <div className="flex items-center gap-2">
        <div className="flex h-4 min-w-0 flex-1 items-center border-l border-dashed border-[#5c8bd6] bg-[#595959]">
          <input id={id} type="range" defaultValue="60" className="h-4 min-w-0 flex-1 appearance-none bg-transparent [&::-webkit-slider-thumb]:h-2 [&::-webkit-slider-thumb]:w-px [&::-webkit-slider-thumb]:appearance-none [&::-webkit-slider-thumb]:bg-[#d0d0d0]" />
          <span className="w-4 text-[12px] text-[#ddd]">{value}</span>
        </div>
        <button aria-label="透過性 ByLayer" className="relative h-5 w-10 bg-[#5d5d5d] pl-1">
          <Svg size={16} box={20}>{sheet(13)}{sheet(9, W)}{sheet(4, B)}</Svg>
          <Caret />
        </button>
      </div>
    );
  }
  return (
    <div className="relative">
      {lead === 'color' && <span className="pointer-events-none absolute top-[5px] left-[10px] size-[10px] border-l-2 border-black bg-white" />}
      {lead === 'line' && <span className="pointer-events-none absolute top-[10px] left-[8px] h-px w-[38px] bg-[#ddd]" />}
      <select id={id} className={clsx(field, 'appearance-none', lead === 'color' ? 'pl-[33px]' : lead === 'line' ? 'pl-[60px]' : 'pl-[6px]')}>
        <option>{value}</option>
      </select>
      <Caret />
    </div>
  );
};

const RightPanel = () => (
  <aside className="flex w-[272px] shrink-0 flex-col border-l border-[#454545] text-[12px]">
    <div role="tablist" className="flex h-[27px] text-[#ddd]">
      <button role="tab" aria-selected="true" aria-label="画層" className="flex w-[59px] items-center justify-center"><Svg size={18} box={20}>{sheet(12)}{sheet(7)}{sheet(2)}<circle cx="15" cy="14" r="3.500" fill="#525252" stroke={L} strokeWidth="2" /></Svg></button>
      <button role="tab" aria-label="ブロック" className="flex w-[61px] items-center justify-center border-r border-b border-[#424242] bg-[#4a4a4a]"><Svg size={20}><path d="M1 3h3V1h4v2h6l5 5v10H1z" fill={L} /><path d="M4 6h3v6H4zM9 8h3v3H9z" fill="#666" /></Svg></button>
      <div className="flex flex-1 border-b border-[#424242] bg-[#4a4a4a]">
        <button role="tab" aria-label="シートセット" className="flex w-[58px] items-center justify-center"><Svg size={18} box={20}><path d="M1 2h18v16H1z" fill={L} /><path d="M4 7h7v7H4zM14 7h2v7h-2z" fill="#555" /></Svg></button>
      </div>
      <button aria-label="折りたたむ" className="flex w-[30px] items-center justify-center border-b border-l border-[#424242]"><svg width="9" height="6" fill="none" aria-hidden="true"><path d="M1 5l3-4 4 4" stroke="#bbb" /></svg></button>
    </div>

    <div className="flex h-[22px] items-center justify-between pr-[14px] pl-[10px] text-[#ddd]">
      <h2>画層</h2>
      <button aria-label="切り離し"><svg width="14" height="14" fill="none" aria-hidden="true"><path d="M5 1h8M5 13h8" stroke={W} strokeWidth="1.500" /><path d="M1 7h2" stroke={W} strokeWidth="2" /></svg></button>
    </div>
    <div className="flex h-12 items-center pl-[10px]">
      {layerIcons.map(([name, art]) => (
        <button key={name} aria-label={name} className="flex w-7 justify-center"><Svg>{art}</Svg></button>
      ))}
    </div>

    <div className="flex flex-col gap-[6px] pr-3 pl-3">
      <div className="relative">
        <span className="pointer-events-none absolute inset-y-0 left-3 flex items-center gap-[10px]">
          <svg width="10" height="12" aria-hidden="true"><circle cx="5" cy="5" r="5" fill={L} /><path d="M3 9h4v3H3z" fill={L} /></svg>
          <svg width="8" height="12" fill="none" aria-hidden="true"><path d="M1 11V4q3-6 6 0v7M1 7h6" stroke="#777" /></svg>
          <svg width="10" height="10" fill="none" aria-hidden="true"><path d="M0 5h10M5 1v8M2 2l6 6" stroke="#777" /></svg>
          <span className="size-[11px] border-t-2 border-l border-black bg-white" />
        </span>
        <select aria-label="現在の画層" className="h-[26px] w-full appearance-none rounded-sm border-b border-[#484848] bg-[#5d5d5d] pl-[94px] text-[12px] text-white"><option>0</option></select>
        <Caret />
      </div>
      <div className="relative">
        <select aria-label="画層状態" className="h-[26px] w-full appearance-none rounded-sm border-b border-[#4a4a4a] bg-[#5d5d5d] pl-2 text-[12px] text-[#e6e6e6]"><option>未保存の画層状態</option></select>
        <Caret />
      </div>
    </div>
    <button className="flex h-[34px] items-center gap-[14px] pl-4 text-[#cfcfcf]">
      <svg width="8" height="8" aria-hidden="true"><path d="M0 0l8 4-8 4z" fill="#a5a5a5" /></svg>
      画層リストを表示
    </button>

    <div className="mt-[9px] flex h-[22px] items-center border-t border-[#454545] pr-[9px] pl-3">
      <h2 className="flex-1 text-white">プロパティ</h2>
      <div className="flex h-5 text-[10px]">
        <button className="w-[33px] bg-[#474747] text-[#777]">すべて</button>
        <button aria-label="基本" className="flex w-[35px] items-center justify-center bg-[#666]"><svg width="15" height="8" fill="none" aria-hidden="true"><path d="M1 2l3 4 2-4 2 4 2-4 4-1" stroke={W} strokeWidth="1.500" /></svg></button>
      </div>
      <button aria-label="クイック選択" className="ml-[11px]"><Svg size={17} box={20}><path d="M8 18H2V2h16v5" stroke={L} strokeWidth="2" /><path d="M9 18l8-8" stroke={L} strokeWidth="3.500" /><path d="M6 6h6" stroke={G} /></Svg></button>
      <button aria-label="切り離し" className="ml-[12px]"><Svg size={17} box={20}><path d="M8 6V2h9v16H8v-4" stroke={L} strokeWidth="2" /><path d="M2 10h9M7 6l-4 4 4 4" stroke={L} strokeWidth="2" /></Svg></button>
    </div>

    <div className="relative mx-3 mt-[8px]">
      <select aria-label="選択" disabled className="h-[26px] w-full appearance-none border border-[#4d4d4d] bg-[#545454] pl-[6px] text-[12px] text-[#858585] opacity-100"><option>モデル空間</option></select>
      <Caret dim />
    </div>

    <div className="mt-[5px] grid h-[424px] auto-rows-fr">
      {propRows.map((row, i) => (
        <div key={i} className="grid grid-cols-[120px_122px] items-center gap-[11px]">
          <label htmlFor={`prop-${i}`} className={clsx("font-['Noto_Sans_CJK_JP',sans-serif] leading-4 text-[#c9c9c9]", row.label.endsWith('…') ? 'pl-[35px] whitespace-nowrap' : 'text-right')}>{row.label}</label>
          <PropField row={row} id={`prop-${i}`} />
        </div>
      ))}
    </div>
  </aside>
);

/* ---------- drawing area ---------- */
const DrawingGrid = () => (
  <svg className="absolute inset-0 h-full w-full" aria-hidden="true">
    <defs>
      <pattern id="minor" width="37" height="36.800" patternUnits="userSpaceOnUse" x="9" y="28"><path d="M.5 0v37M0 .5h37" stroke="#252d37" fill="none" /></pattern>
      <pattern id="major" width="185" height="184" patternUnits="userSpaceOnUse" x="119" y="65"><path d="M.5 0v184M0 .5h185" stroke="#2e3744" fill="none" /></pattern>
      <pattern id="cross" width="185" height="184" patternUnits="userSpaceOnUse" x="180" y="155"><path d="M.5 0v184M0 .5h185" stroke="#2a323e" fill="none" /></pattern>
    </defs>
    <rect width="100%" height="100%" fill="url(#minor)" />
    <rect width="100%" height="100%" fill="url(#cross)" />
    <rect width="100%" height="100%" fill="url(#major)" />
    <path d="M0 802.500h4000" stroke="#3b4450" />
    <path d="M1105.500 0v2000" stroke="#343d49" />
  </svg>
);

const ViewCube = () => (
  <div className="absolute top-[13px] right-[15px] w-[160px] text-[21px] leading-6 text-[#b3b7bc]">
    <div className="relative flex h-[160px] items-center justify-center">
      <span className="absolute size-[140px] rounded-full border-[17px] border-[#474e57]" />
      <button className="absolute top-[4px]">北</button>
      <button className="absolute bottom-[2px]">南</button>
      <button className="absolute left-[4px]">西</button>
      <button className="absolute right-[4px]">東</button>
      <button className="relative flex size-[59px] items-center justify-center bg-[#abadb0]">
        <span className="flex size-9 items-center justify-center bg-[#9fa6b1] text-[36px] leading-9 text-[#4d535c]">上</span>
      </button>
    </div>
    <button className="mx-auto mt-[23px] flex h-[14px] w-[59px] items-center justify-center gap-2 rounded-md bg-[#6f8088] text-[11px] leading-3 font-semibold text-[#2a333c]">
      WCS
      <svg width="10" height="7" fill="none" aria-hidden="true"><path d="M1 1h8L5 6z" stroke="#2a333c" /></svg>
    </button>
  </div>
);

const Canvas = () => (
  <main className="relative flex flex-1 flex-col justify-between overflow-hidden bg-[#212830]">
    <DrawingGrid />
    <div className="relative flex items-center gap-[5px] pt-1 pl-[14px] text-[13px] leading-5 text-[#a9adb2]">
      <button className="w-3 text-center">+</button>
      <span className="ml-2 h-4 w-px bg-[#6c7076]" />
      <button className="text-[12px]">平面図</button>
      <span className="ml-[5px] h-4 w-px bg-[#6c7076]" />
      <button>2D ワイヤフレーム</button>
    </div>
    <ViewCube />
    <svg className="absolute bottom-0 left-3 font-['Liberation_Sans']" width="100" height="110" fill="none" aria-label="UCS">
      <path d="M11.500 30v57M18 87.500h50" stroke="#4c535b" />
      <path d="M6.500 82v10h11v-10" stroke="#4c535b" />
      <text x="20" y="26" textAnchor="middle" fontSize="20" fill="#c8cbce">Y</text>
      <text x="80" y="85" textAnchor="middle" fontSize="20" fill="#c8cbce">X</text>
    </svg>
    <div className="relative mx-auto flex h-[27px] w-[573px] max-w-full items-center bg-[#444] text-[#aaa]">
      <button aria-label="コマンド履歴" className="flex h-full w-[46px] items-center justify-center gap-3 border-r border-[#3a3a3a]">
        <svg width="8" height="8" fill="none" aria-hidden="true"><path d="M1 1l6 3-6 3" stroke="#c4c4c4" strokeWidth="1.500" /></svg>
        <svg width="6" height="4" aria-hidden="true"><path d="M0 0h6L3 4z" fill="#aaa" /></svg>
      </button>
      <input aria-label="コマンド" placeholder="ここにコマンドを入力" className="h-6 flex-1 self-start bg-transparent pl-[5px] text-[12px] outline-none placeholder:text-[#b5b5b5]" />
      <button aria-label="展開" className="px-[6px]"><svg width="5" height="4" aria-hidden="true"><path d="M0 4h5L3 0z" fill="#bbb" /></svg></button>
    </div>
  </main>
);

/* ---------- status bar ---------- */
const man = <><circle cx="10" cy="4" r="3" fill={W} /><path d="M10 4v6L4 18M10 9l6 9" stroke={W} strokeWidth="3" /></>;
const status = [
  ['グリッド', 1, <path d="M6 1v18M10 1v18M15 1v18M1 5h18M1 10h18M1 15h18" stroke={W} strokeWidth="2" />],
  ['スナップ', 0, <path d="M3 4h15M3 10h15M3 16h15" stroke={L} strokeWidth="2" strokeDasharray="2 4" />],
  ['直交', 0, <path d="M4 1v18M4 12h5v7" stroke={L} strokeWidth="2" />],
  ['極', 1, <><circle cx="9" cy="10" r="7" stroke={W} strokeWidth="1.500" strokeDasharray="5 2" /><path d="M5 10h14M12 6v8" stroke={W} strokeWidth="2" /></>],
  ['トラッキング', 1, <><path d="M3 1v12h5" stroke={W} strokeWidth="2" /><path d="M8 10h5l5 3v4H8z" fill={W} /></>],
  ['線の太さ', 0, <path d="M1 4h18M1 9h15M1 14h9M1 18h7" stroke={W} strokeWidth="2.500" />],
  ['透過性', 1, <><path d="M3 3l14 6M17 3L3 9M3 11l14 6M17 11L3 17" stroke={W} strokeWidth="2" strokeDasharray="2 1" /><path d="M2 18h16" stroke={W} strokeWidth="2" /></>],
  ['選択', 1, <path d="M3 17V3h9v6H6M10 8l4 10 1-4 4 3" stroke={W} strokeWidth="2" />],
  ['スナップ点', 1, <path d="M3 18L17 3M11 5l-2 8" stroke={W} strokeWidth="2" />],
  ['UCS', 1, <path d="M4 19V4h15M1 1h6v6H1z" stroke={W} strokeWidth="2" />],
  ['注釈', 1, <>{man}<path d="M12 2h7l-4 9z" fill={W} /></>],
  ['注釈追加', 0, <>{man}<path d="M14 2h4v4h-4z" fill={Y} /></>],
  ['注釈尺度', 0, man],
];

const StatusBar = () => (
  <footer className="flex h-[27px] items-stretch text-[11px] text-[#c2c2c2]">
    <div className="flex w-[211px] items-center gap-[27px] pl-[23px]">
      <button aria-label="追加"><svg width="2" height="12" aria-hidden="true"><path d="M0 0h2v12H0z" fill="#c4c4c4" /></svg></button>
      <button aria-label="一覧"><svg width="15" height="12" fill="none" aria-hidden="true"><path d="M3 2h12M0 10h10M12 10h3" stroke={L} strokeWidth="2.500" /></svg></button>
    </div>
    <button className="w-[69px] bg-[#6b6b6b] text-[12px] font-semibold text-white">モデル</button>
    <button aria-label="新規レイアウト" className="flex w-[27px] items-center justify-center border-r border-[#464646]"><svg width="14" height="12" fill="none" aria-hidden="true"><path d="M7 0v12M0 6h14" stroke={L} strokeWidth="1.500" /></svg></button>
    <button className="w-[75px] border-r border-[#4b4b4b]">レイアウト1</button>
    <button className="w-[75px] border-r border-[#4b4b4b]">レイアウト2</button>
    <span className="flex-1" />
    <div className="flex w-[216px] items-center justify-between border-l border-[#454545] pr-1 pl-2 text-[13px] whitespace-nowrap text-[#b8b8b8]">
      <span>5456.6387,</span><span>1888.4558 ,</span><span>0.0000</span>
    </div>
    <div className="flex items-center gap-[3px] pr-[7px]">
      {status.map(([name, on, art]) => (
        <button key={name} aria-label={name} className={clsx('flex h-6 w-[22px] items-center justify-center', on ? 'bg-[#668dbf]' : 'bg-transparent')}><Svg size={18} box={20}>{art}</Svg></button>
      ))}
      <button className="flex items-center gap-[6px] pl-[3px] text-[10px] text-[#a5a5a5]">1:1<svg width="7" height="6" aria-hidden="true"><path d="M0 0h7L4 5z" fill={L} /></svg></button>
      <button aria-label="隔離" className="ml-[8px]"><Svg size={20}><path d="M1 2h7M1 7h6M10 9l6-6 3 8M4 18l5-6 5 6" stroke={L} strokeWidth="2" strokeDasharray="5 1" /></Svg></button>
      <button aria-label="設定" className="ml-[3px]"><Svg size={19} box={20}><circle cx="10" cy="10" r="5" stroke={W} strokeWidth="2.500" /><circle cx="10" cy="10" r="7.500" stroke={W} strokeWidth="3" strokeDasharray="3 2.900" /></Svg></button>
    </div>
  </footer>
);

const App = () => (
  <div className="flex min-h-screen flex-col bg-[#0b0c0c] pt-[5px] pr-[3px] pl-1 font-['Inter','Noto_Sans_CJK_JP',sans-serif]">
    <svg className="absolute size-0" aria-hidden="true">
      <defs>
        <pattern id="hatch" width="6" height="6" patternUnits="userSpaceOnUse"><path d="M-1 1l2-2M0 6l6-6M5 7l2-2" stroke={B} strokeWidth="1.500" /></pattern>
        <linearGradient id="grad" x1="0" y1="0" x2="0" y2="1"><stop offset="0" stopColor="#86c6ff" /><stop offset="0.350" stopColor="#86bdf0" /><stop offset="1" stopColor="#5b5f64" /></linearGradient>
      </defs>
    </svg>
    <div className="flex flex-1 flex-col border-t-2 border-r-2 border-l-[3px] border-t-[#b4bed1] border-r-[#2c4882] border-l-[#34497a] bg-[#525252]">
      <header className="border-t border-b border-t-[#3d5078] border-b-[#4a4a4a]">
        <div className="grid h-[26px] grid-cols-3 items-center">
          <div className="flex gap-[9px] pl-[9px]">
            <button aria-label="閉じる" className="size-[14px] rounded-full bg-[#ee6158]" />
            <button aria-label="しまう" className="size-[14px] rounded-full bg-[#f6bf50]" />
            <button aria-label="拡大" className="size-[14px] rounded-full bg-[#61c554]" />
          </div>
          <h1 className="text-center text-[15px] leading-5 text-[#ececec]">Drawing1.dwg</h1>
          <button className="flex h-6 w-[139px] items-center justify-self-end border-l border-[#353535] bg-[#434343] px-[6px] text-[14px] leading-5 text-[#e5e5e5]">
            <svg width="16" height="18" aria-hidden="true"><path d="M4 1h8v7l-2 3 5 2v4H1v-4l5-2-2-3z" fill={W} /><path d="M0 17h16" stroke="#8fa3c4" strokeWidth="2" /></svg>
            <span className="ml-[7px] flex-1 text-left">サインイン</span>
            <svg width="9" height="6" aria-hidden="true"><path d="M0 0h9L5 6z" fill="#aaa" /></svg>
          </button>
        </div>
        <nav className="flex h-[33px] gap-[55px] pb-1 pl-[183px]">
          {barGroups.map((group) => (
            <div key={group[0]} className="flex">
              {group.map((id) => (
                <button key={id} aria-label={id} className="flex w-[38px] items-center justify-center">
                  <svg className="overflow-visible" width="19" height="19" viewBox="0 0 20 20" fill="none" aria-hidden="true">{bar[id]}</svg>
                </button>
              ))}
            </div>
          ))}
        </nav>
      </header>

      <div className="flex flex-1">
        <aside className="w-[211px] shrink-0">
          <div role="tablist" className="flex h-6 text-[14px] leading-5">
            <button role="tab" aria-selected="true" className="w-[91px] font-semibold text-white">作図補助</button>
            <button role="tab" className="w-24 border-b border-l border-[#424242] bg-[#4a4a4a] text-[#808080]">モデリング</button>
            <button aria-label="次のタブ" className="flex flex-1 items-center justify-center border-b border-l border-[#424242]"><svg width="7" height="5" fill="none" aria-hidden="true"><path d="M0 2h2M4 1h3M5 2v3" stroke="#999" /></svg></button>
          </div>
          {sections.map((sec) => <Section key={sec.name} {...sec} />)}
        </aside>

        <div className="flex min-w-0 flex-1 flex-col border-l border-[#464646]">
          <div className="flex h-7">
            <button aria-label="ファイルタブ" className="flex w-7 items-center justify-center border-r border-[#484848]"><Svg size={18} box={20}><path d="M5 5h15v15H5z" fill={L} /><path d="M12 5v15M5 13h15" stroke="#777" /><path d="M0 0h11v11H0z" fill={B} /></Svg></button>
            <button aria-label="新規図面" className="flex w-[27px] items-center justify-center"><svg width="13" height="13" fill="none" aria-hidden="true"><path d="M6.500 0v13M0 6.500h13" stroke={L} /></svg></button>
            <button className="w-[148px] bg-[#6d6d6d] pl-1 text-left text-[13px] leading-5 text-white">Drawing1</button>
          </div>
          <Canvas />
        </div>

        <RightPanel />
      </div>
      <StatusBar />
    </div>
  </div>
);

export default App;
